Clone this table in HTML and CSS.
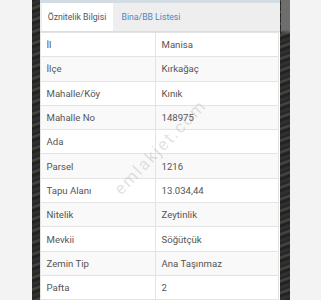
FILE: index.html
```html
<!DOCTYPE html>
<html lang="tr">
<head>
<meta charset="utf-8">
<link rel="stylesheet" href="styles.css">
</head>
<body>
<div class="page">
  <div class="side"></div>
  <div class="map">
    <div class="panel">
      <div class="topband"></div>
      <div class="tabs">
        <div class="tab active">Öznitelik Bilgisi</div>
        <div class="tab">Bina/BB Listesi</div>
      </div>
      <table class="attrs">
        <tr><td class="k">İl</td><td>Manisa</td></tr>
        <tr><td class="k">İlçe</td><td>Kırkağaç</td></tr>
        <tr><td class="k">Mahalle/Köy</td><td>Kınık</td></tr>
        <tr><td class="k">Mahalle No</td><td>148975</td></tr>
        <tr><td class="k">Ada</td><td></td></tr>
        <tr><td class="k">Parsel</td><td>1216</td></tr>
        <tr><td class="k">Tapu Alanı</td><td>13.034,44</td></tr>
        <tr><td class="k">Nitelik</td><td>Zeytinlik</td></tr>
        <tr><td class="k">Mevkii</td><td>Söğütçük</td></tr>
        <tr><td class="k">Zemin Tip</td><td>Ana Taşınmaz</td></tr>
        <tr><td class="k">Pafta</td><td>2</td></tr>
      </table>
      <div class="greenbar"></div>
      <div class="watermark">emlakjet.com</div>
    </div>
  </div>
  <div class="side"></div>
</div>
</body>
</html>
```
FILE: styles.css
```css
html, body {
  margin: 0;
  padding: 0;
  height: 300px;
  overflow: hidden;
  background: #f3f3f3;
  font-family: Roboto, "Noto Sans", "Liberation Sans", sans-serif;
}
.page {
  display: flex;
  height: 300px;
}
.side {
  flex: 1;
  background: #f3f3f3;
}
.map {
  flex: none;
  width: 241px;
  padding: 0 9px 0 8px;
  background:
    linear-gradient(180deg, #6e6e6e 0, #6e6e6e 30px, transparent 34px) right top / 9px 100% no-repeat,
    repeating-linear-gradient(160deg, #1e1e1e 0, #333 3px, #242424 6px, #4a4a44 8px, #1c1c1c 11px);
  background-color: #262626;
}
.panel {
  position: relative;
  width: 240px;
  height: 300px;
  background: #fff;
  overflow: hidden;
}
.topband {
  height: 3px;
  background: #d3dbe3;
}
.tabs {
  display: flex;
  height: 28px;
  background: #eeeeee;
  padding-left: 2px;
  border-bottom: 1px solid #dddddd;
}
.tab {
  display: flex;
  align-items: center;
  padding: 0 9px;
  font-size: 8.7px;
  white-space: nowrap;
  color: #4a86c3;
}
.tab.active {
  width: 71px;
  box-sizing: border-box;
  justify-content: center;
  padding: 0;
  background: #fff;
  color: #555;
}
.attrs {
  width: 239px;
  border-collapse: collapse;
  font-size: 9.6px;
  color: #555;
}
.attrs tr {
  height: 24.3px;
}
.attrs tr:nth-child(even) {
  background: #f9f9f9;
}
.attrs td {
  border: 1px solid #e3e3e3;
  padding: 0 6px;
  vertical-align: middle;
}
.attrs td.k {
  width: 102px;
}
.greenbar {
  height: 2px;
  background: #86c986;
}
.watermark {
  position: absolute;
  left: 55px;
  top: 137px;
  width: 130px;
  text-align: center;
  transform: rotate(-46deg);
  font-size: 17px;
  letter-spacing: 1.8px;
  color: rgba(150, 150, 150, 0.28);
  pointer-events: none;
}
```
